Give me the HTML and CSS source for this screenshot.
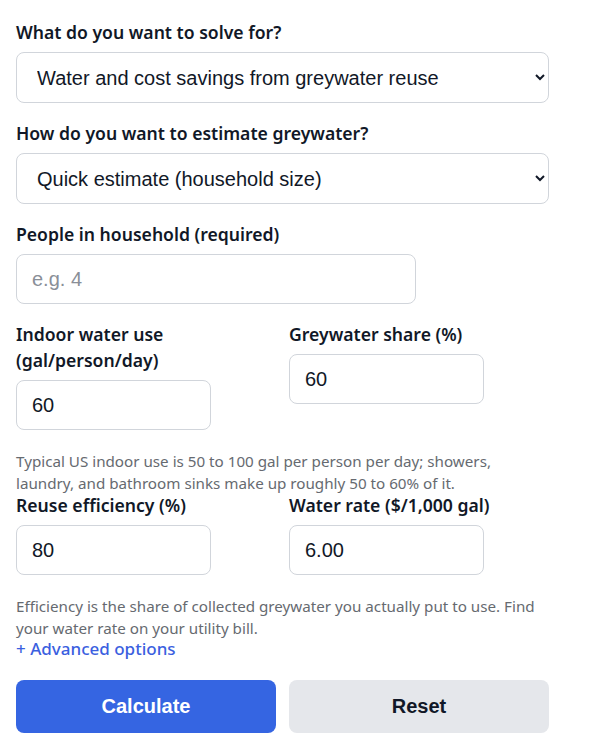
FILE: index.html
```html
<!DOCTYPE html>
<html lang="en">
<head>
    <meta charset="UTF-8">
    <title>Greywater savings calculator</title>
    <link rel="stylesheet" href="styles.css">
</head>
<body>
    <form class="calc">
        <!--what to solve for-->
        <div class="field">
            <label for="solve">What do you want to solve for?</label>
            <select id="solve" class="wide">
                <option>Water and cost savings from greywater reuse</option>
            </select>
        </div>
        <div class="field">
            <label for="method">How do you want to estimate greywater?</label>
            <select id="method" class="wide">
                <option>Quick estimate (household size)</option>
            </select>
        </div>
        <div class="field">
            <label for="people">People in household (required)</label>
            <input id="people" class="mid" type="text" placeholder="e.g. 4">
        </div>
        <!--two columns-->
        <div class="row">
            <div class="field">
                <label for="use">Indoor water use (gal/person/day)</label>
                <input id="use" type="text" value="60">
            </div>
            <div class="field">
                <label for="share">Greywater share (%)</label>
                <input id="share" type="text" value="60">
            </div>
        </div>
        <p class="hint">Typical US indoor use is 50 to 100 gal per person per day; showers, laundry, and bathroom sinks make up roughly 50 to 60% of it.</p>
        <div class="row">
            <div class="field">
                <label for="eff">Reuse efficiency (%)</label>
                <input id="eff" type="text" value="80">
            </div>
            <div class="field">
                <label for="rate">Water rate ($/1,000 gal)</label>
                <input id="rate" type="text" value="6.00">
            </div>
        </div>
        <p class="hint">Efficiency is the share of collected greywater you actually put to use. Find your water rate on your utility bill.</p>
        <a class="adv" href="#">+ Advanced options</a>
        <!--buttons-->
        <div class="buttons">
            <button type="button" class="btn primary">Calculate</button>
            <button type="button" class="btn">Reset</button>
        </div>
    </form>
</body>
</html>
```
FILE: styles.css
```css
/**page**/
body{
    margin: 0;
    background-color: #fff;
    color: #111827;
    font-family: "Noto Sans", "Open Sans", sans-serif;
}
.calc{
    width: 533px;
    padding: 19px 16px;
}
/**fields**/
.field{
    margin-bottom: 17px;
}
.field label{
    display: block;
    margin-bottom: 7px;
    font-size: 17.6px;
    font-weight: 600;
    line-height: 26px;
}
select,input{
    box-sizing: border-box;
    width: 75%;
    height: 50px;
    padding: 0 15px;
    border: 1px solid #d1d5db;
    border-radius: 8px;
    background-color: #fff;
    color: #111827;
    font-family: "Liberation Sans", Arial, sans-serif;
    font-size: 20px;
}
select.wide{
    width: 100%;
    height: 51px;
    padding: 0 12px 0 16px;
}
input::placeholder{
    color: #8a8f98;
}
.row{
    display: grid;
    grid-template-columns: 1fr 1fr;
    column-gap: 13px;
}
/**hints**/
.hint{
    margin: 3px 0 -2px;
    font-size: 15.2px;
    line-height: 22px;
    color: #666a70;
}
.adv{
    display: block;
    font-size: 17px;
    font-weight: 500;
    line-height: 24px;
    color: #3b5fe0;
    text-decoration: none;
}
/**buttons**/
.buttons{
    display: grid;
    grid-template-columns: 1fr 1fr;
    column-gap: 13px;
    margin-top: 19px;
}
.btn{
    height: 53px;
    border: 0;
    border-radius: 8px;
    background-color: #e5e7eb;
    color: #111827;
    font-family: "Liberation Sans", Arial, sans-serif;
    font-size: 20px;
    font-weight: bold;
    cursor: pointer;
}
.btn.primary{
    background-color: #3565e2;
    color: #fff;
}
```
